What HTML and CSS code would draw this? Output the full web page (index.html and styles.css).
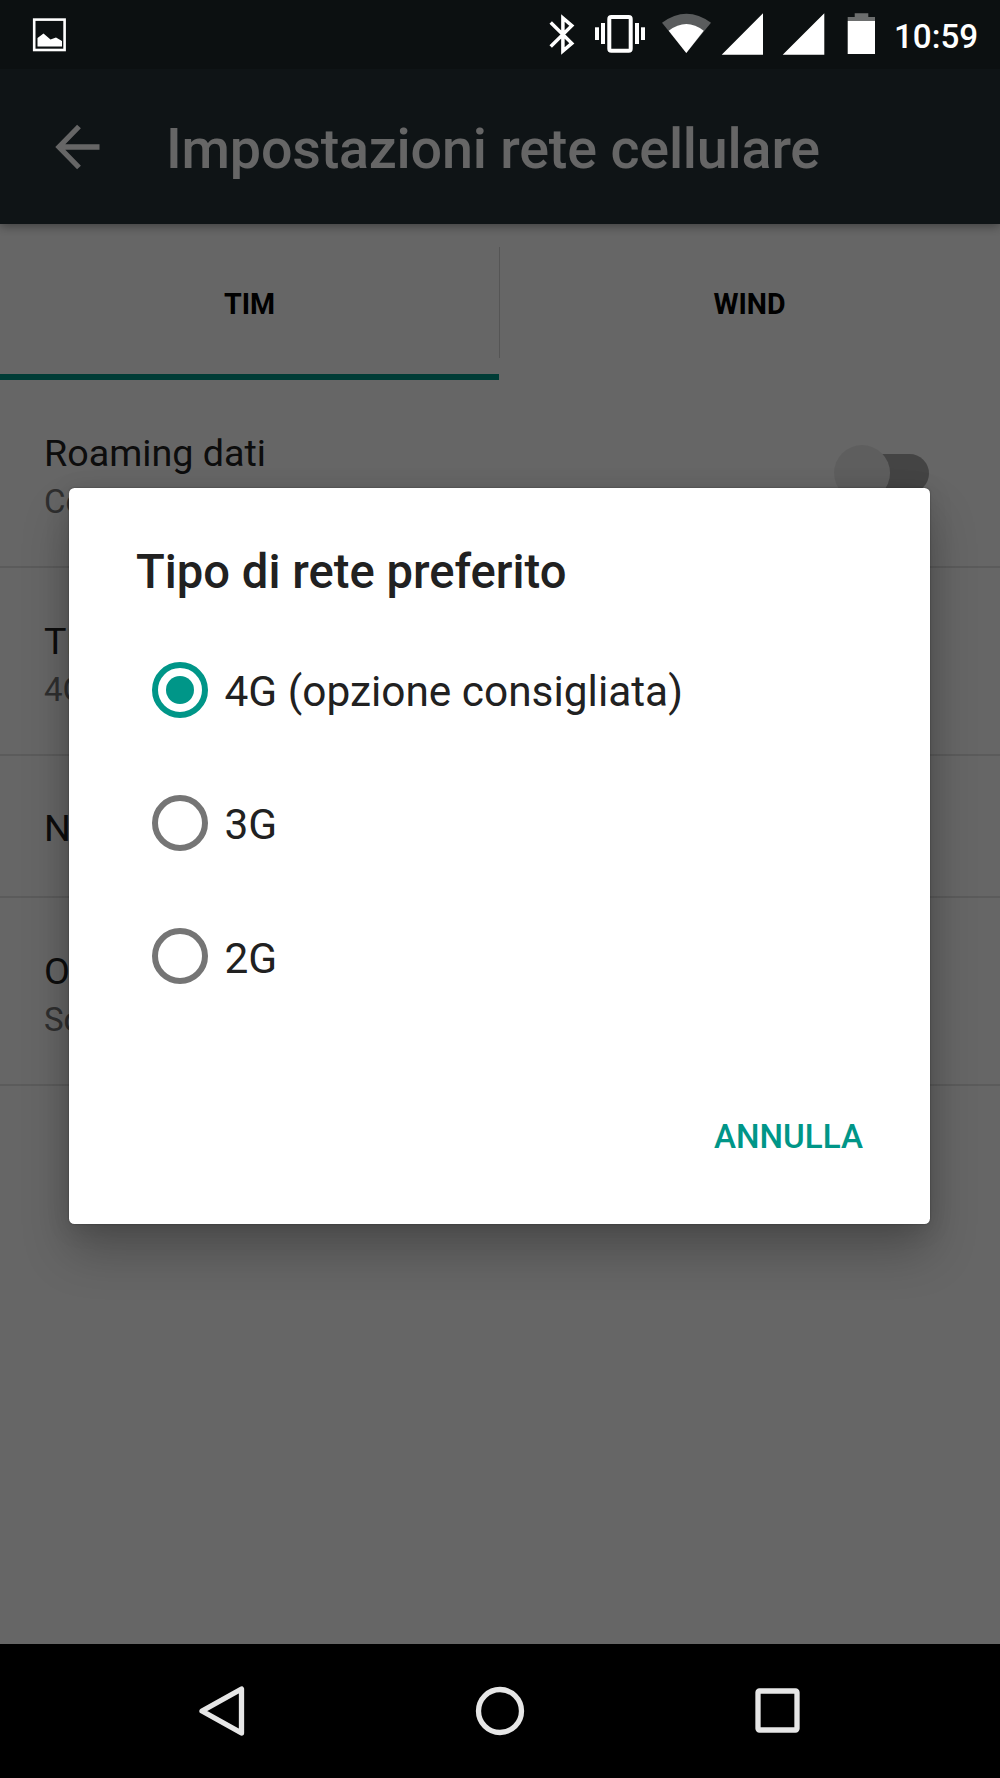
FILE: index.html
```html
<!DOCTYPE html>
<html lang="it">
<head>
  <meta charset="UTF-8">
  <title>Impostazioni rete cellulare</title>
  <link rel="stylesheet" href="styles.css">
</head>
<body>
  <div class="screen">
    <div class="status-bar">
      <svg class="status-left" width="34" height="34" viewBox="0 0 34 34">
        <rect x="2.2" y="1.6" width="30.4" height="30.4" fill="none" stroke="#fff" stroke-width="2.6"/>
        <path d="M5.5 28.5V20l6-4.5 7 6 5.5-2 6 3.5v5.5z" fill="#fff"/>
      </svg>
      <svg class="status-right" width="326" height="48" viewBox="0 0 326 48">
        <!-- bluetooth -->
        <path d="M1.7 12.5L22.8 33.3 13.9 41V8l8.9 7.7L1.7 36.5" fill="none" stroke="#fff" stroke-width="3.5"/>
        <!-- vibrate -->
        <g fill="#fff">
          <rect x="46" y="17.3" width="4" height="12.7"/>
          <rect x="52" y="13" width="4" height="21"/>
          <rect x="86" y="13" width="4" height="21"/>
          <rect x="92" y="17.3" width="4" height="12.7"/>
        </g>
        <rect x="60.3" y="7" width="21.4" height="33.7" rx="2" fill="none" stroke="#fff" stroke-width="4"/>
        <!-- wifi -->
        <path d="M113 12.7Q137.5-5.3 162 12.7L137.3 43z" fill="#5a5c5d"/>
        <path d="M119.7 20.7Q137.5 7.3 154.7 20.7L137.3 43z" fill="#fff"/>
        <!-- signal x2 -->
        <path d="M172.7 44.7L214 3.3v41.4zM233.7 44.7L275.3 3.3v41.4z" fill="#fff"/>
        <!-- battery -->
        <path d="M298.7 11V7h7V3.3h13.6V7h6.7v4z" fill="#6c6e6e"/>
        <rect x="298.7" y="11" width="27.3" height="33" fill="#fff"/>
      </svg>
      <span class="clock">10:59</span>
    </div>

    <div class="app-bar">
      <svg class="back" width="46" height="46" viewBox="0 0 46 46">
        <path d="M44.5 23H5M24 2.5L4 23l20 20.5" fill="none" stroke="#fff" stroke-width="5.3"/>
      </svg>
      <h1>Impostazioni rete cellulare</h1>
    </div>

    <div class="tabs">
      <div class="tab active">TIM</div>
      <div class="tab">WIND</div>
    </div>

    <div class="list">
      <div class="row">
        <div class="text">
          <div class="name">Roaming dati</div>
          <div class="summary">Connessione a servizi dati in roaming</div>
        </div>
        <div class="switch"><div class="thumb"></div></div>
      </div>
      <div class="row">
        <div class="text">
          <div class="name">Tipo di rete preferito</div>
          <div class="summary">4G (opzione consigliata)</div>
        </div>
      </div>
      <div class="row single">
        <div class="text">
          <div class="name">Nomi punti di accesso</div>
        </div>
      </div>
      <div class="row">
        <div class="text">
          <div class="name">Operatori di rete</div>
          <div class="summary">Scegli un operatore di rete</div>
        </div>
      </div>
    </div>

    <div class="nav-bar">
      <svg width="52" height="52" viewBox="0 0 52 52">
        <path d="M45.5 4v44L6 26z"/>
      </svg>
      <svg width="52" height="52" viewBox="0 0 52 52">
        <circle cx="26" cy="26" r="21.5"/>
      </svg>
      <svg width="52" height="52" viewBox="0 0 52 52">
        <rect x="6" y="6" width="39" height="39" rx="1.5"/>
      </svg>
    </div>

    <div class="scrim">
      <div class="dialog">
        <h2>Tipo di rete preferito</h2>
        <div class="option"><span class="radio checked"></span><span class="label">4G (opzione consigliata)</span></div>
        <div class="option"><span class="radio"></span><span class="label">3G</span></div>
        <div class="option"><span class="radio"></span><span class="label">2G</span></div>
        <div class="actions"><span class="button">ANNULLA</span></div>
      </div>
    </div>
  </div>
</body>
</html>
```

FILE: styles.css
```css
* {
  box-sizing: border-box;
}
body {
  margin: 0;
  font-family: Roboto, sans-serif;
  color: #212121;
}
h1, h2 {
  margin: 0;
  font-weight: 500;
  white-space: nowrap;
}
svg {
  flex-shrink: 0;
}
.screen {
  position: relative;
  display: flex;
  flex-direction: column;
  width: 1000px;
  height: 1778px;
  overflow: hidden;
  background: #fff;
}

/* status bar */
.status-bar {
  position: relative;
  z-index: 3;
  display: flex;
  height: 69px;
  background: #0c1011;
  color: #fff;
}
.status-left {
  margin: 18px 0 0 32px;
}
.status-right {
  margin: 10px 0 0 483px;
}
.clock {
  margin-left: 19px;
  font-size: 33.2px;
  font-weight: 500;
  line-height: 73px;
}

/* app bar */
.app-bar {
  position: relative;
  display: flex;
  align-items: center;
  height: 155px;
  padding-left: 55px;
  background: #263238;
  color: #fff;
  box-shadow: 0 2px 10px rgba(0, 0, 0, 0.4);
}
.app-bar h1 {
  margin-left: 65px;
  padding-top: 4px;
  font-size: 55.6px;
  letter-spacing: -0.18px;
}

/* tabs */
.tabs {
  display: flex;
  height: 156px;
}
.tab {
  position: relative;
  flex: 1;
  padding-top: 3px;
  font-size: 28.6px;
  font-weight: 700;
  line-height: 154px;
  text-align: center;
  color: #000;
}
.tab.active {
  flex: 0 0 499px;
  border-bottom: 6px solid #009688;
}
.tab.active::after {
  content: "";
  position: absolute;
  top: 23px;
  right: -1px;
  width: 1px;
  height: 111px;
  background: #d5d5d5;
}

/* preferences */
.list {
  flex: 1;
}
.row {
  display: flex;
  align-items: center;
  height: 188px;
  padding: 0 71px 0 44px;
  border-bottom: 2px solid #e4e4e4;
}
.row.single {
  height: 142px;
}
.row.single .text {
  padding-top: 4px;
}
.text {
  flex: 1;
  padding-top: 9px;
}
.name {
  font-size: 37.7px;
  line-height: 48px;
}
.summary {
  font-size: 33px;
  line-height: 50px;
  color: #757575;
}
.switch {
  display: flex;
  align-items: center;
  width: 84px;
  height: 39px;
  margin-left: 10px;
  border-radius: 20px;
  background: #aaa;
}
.thumb {
  width: 56px;
  height: 56px;
  margin-left: -11px;
  border-radius: 50%;
  background: #ececec;
}

/* navigation */
.nav-bar {
  position: relative;
  z-index: 3;
  display: flex;
  justify-content: center;
  align-items: center;
  gap: 226px;
  height: 134px;
  padding-right: 1px;
  background: #000;
}
.nav-bar svg {
  fill: none;
  stroke: #e6e6e6;
  stroke-width: 5.3;
  stroke-linejoin: round;
}

/* dialog */
.scrim {
  position: absolute;
  inset: 69px 0 134px;
  z-index: 2;
  display: flex;
  justify-content: center;
  align-items: center;
  padding: 0 1px 1px 0;
  background: rgba(0, 0, 0, 0.6);
}
.dialog {
  width: 861px;
  height: 736px;
  padding: 50px 67px 0;
  border-radius: 5.5px;
  background: #fff;
  box-shadow: 0 0 2px rgba(0, 0, 0, 0.4), 0 28px 48px rgba(0, 0, 0, 0.24), 0 4px 24px rgba(0, 0, 0, 0.12);
}
.dialog h2 {
  height: 85px;
  font-size: 47.2px;
  line-height: 68px;
}
.option {
  display: flex;
  align-items: center;
  height: 133.3px;
  padding-left: 16px;
}
.radio {
  width: 56px;
  height: 56px;
  margin-right: 16.5px;
  border: 6px solid #757575;
  border-radius: 50%;
}
.radio.checked {
  padding: 8px;
  border-color: #009688;
  background: #009688 content-box;
}
.label {
  padding-top: 4px;
  font-size: 42.4px;
}
.actions {
  display: flex;
  justify-content: flex-end;
  margin-top: 94px;
}
.button {
  font-size: 33.2px;
  font-weight: 500;
  color: #009688;
}
```
